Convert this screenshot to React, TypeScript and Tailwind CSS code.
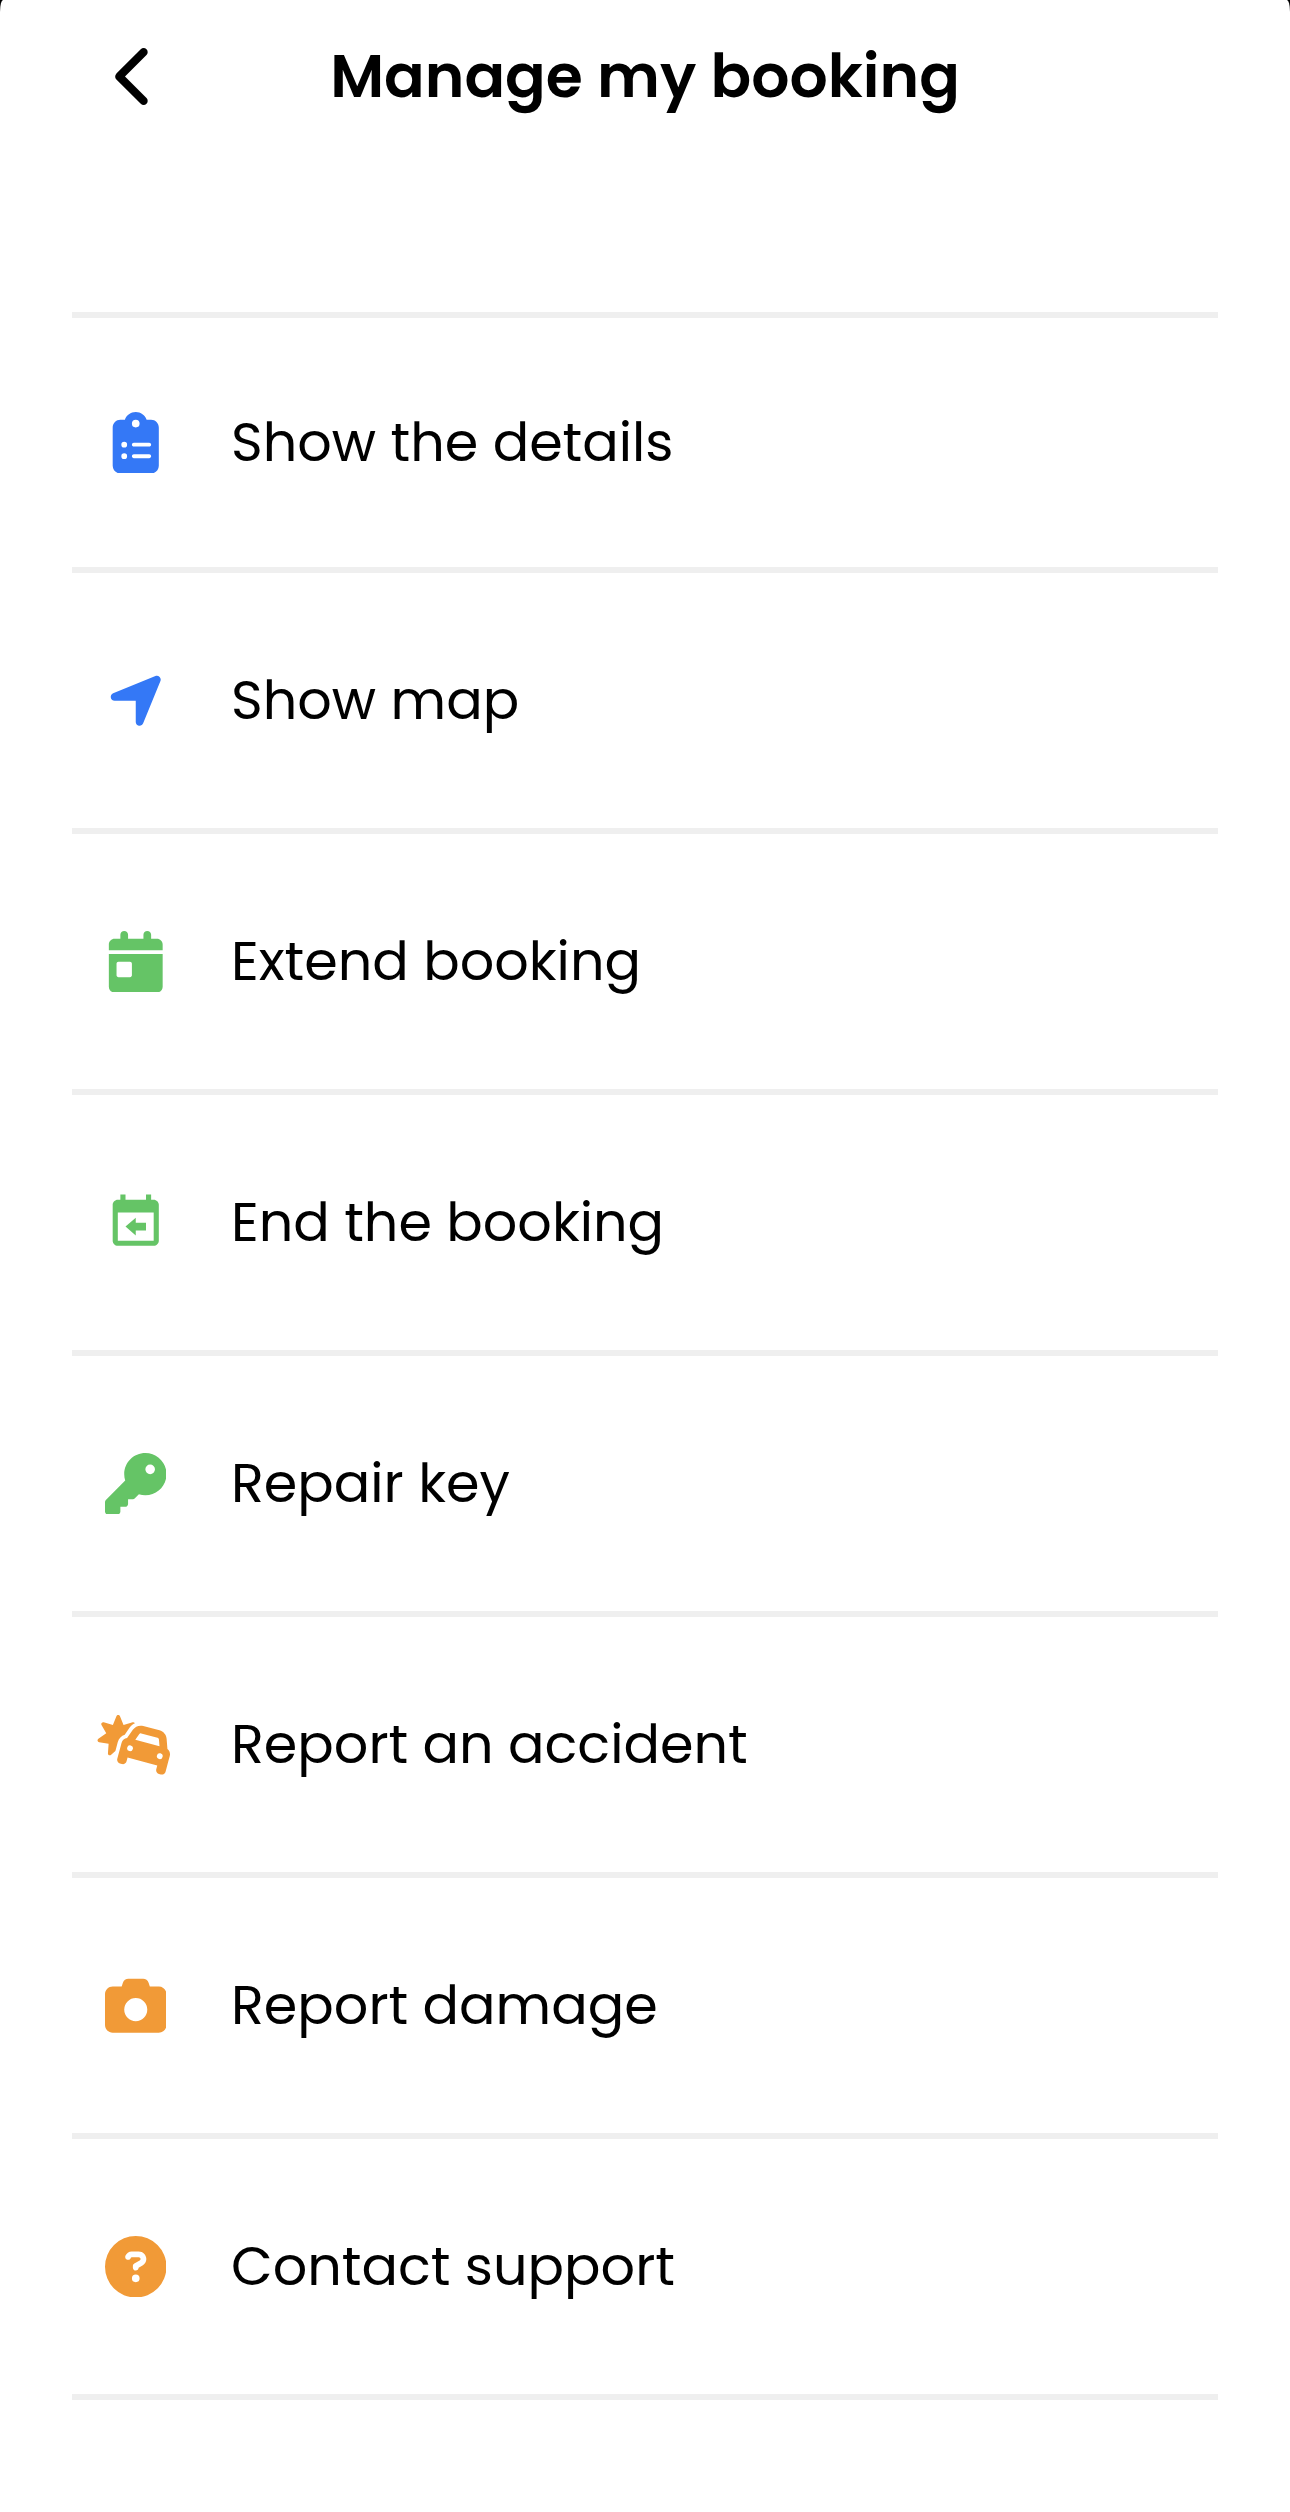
import type { ReactNode } from "react";
import {
  FaCalendarDay,
  FaCamera,
  FaCarBurst,
  FaChevronLeft,
  FaCircleQuestion,
  FaClipboardList,
  FaKey,
  FaLocationArrow,
} from "react-icons/fa6";

interface MenuItem {
  label: string;
  icon: ReactNode;
  color: string;
}

const ITEMS: MenuItem[] = [
  { label: "Show the details", icon: <FaClipboardList />, color: "text-[#3478f6]" },
  { label: "Show map", icon: <FaLocationArrow />, color: "text-[#3478f6]" },
  { label: "Extend booking", icon: <FaCalendarDay />, color: "text-[#65c466]" },
  { label: "End the booking", icon: <CalendarReturnIcon />, color: "text-[#65c466]" },
  { label: "Repair key", icon: <FaKey />, color: "text-[#65c466]" },
  {
    label: "Report an accident",
    icon: <FaCarBurst className="h-[61.5px] w-[77px]" />,
    color: "text-[#f19a37]",
  },
  { label: "Report damage", icon: <FaCamera />, color: "text-[#f19a37]" },
  { label: "Contact support", icon: <FaCircleQuestion />, color: "text-[#f19a37]" },
];

export default function App() {
  return (
    <div className="bg-black">
      <main className="min-h-[2512px] w-[1290px] rounded-t-[3px_12px] bg-white font-[Poppins,Inter,sans-serif] text-black">
        <header className="grid h-[312px] grid-cols-[1fr_auto_1fr] items-start px-[72px]">
          <button type="button" aria-label="Back" className="mt-11 ml-[31px] w-fit text-[65px]">
            <FaChevronLeft />
          </button>
          <h1 className="mt-9 text-[60px] leading-[80px] font-semibold whitespace-nowrap">
            Manage my booking
          </h1>
        </header>
        <ul className="mx-[72px] border-t-6 border-[#efefef]">
          {ITEMS.map((item) => (
            <li key={item.label} className="h-[261px] border-b-6 border-[#efefef] first:h-[255px]">
              <button type="button" className="flex h-full w-full items-center text-left">
                <span className={`flex w-[127px] justify-center text-[61.5px] ${item.color}`}>
                  {item.icon}
                </span>
                <span className="ml-8 text-[54px] whitespace-nowrap">{item.label}</span>
              </button>
            </li>
          ))}
        </ul>
      </main>
    </div>
  );
}

/** Calendar page with a left-pointing arrow. */
function CalendarReturnIcon() {
  return (
    <svg viewBox="0 0 24 24" width="1em" height="1em" fill="currentColor" aria-hidden="true">
      <path d="M19 3h-1V1h-2v2H8V1H6v2H5c-1.1 0-2 .9-2 2v14c0 1.1.9 2 2 2h14c1.1 0 2-.9 2-2V5c0-1.1-.9-2-2-2zm0 16H5V8h14v11z" />
      <path d="M12 10v2h4v3h-4v2l-4-3.5z" />
    </svg>
  );
}
